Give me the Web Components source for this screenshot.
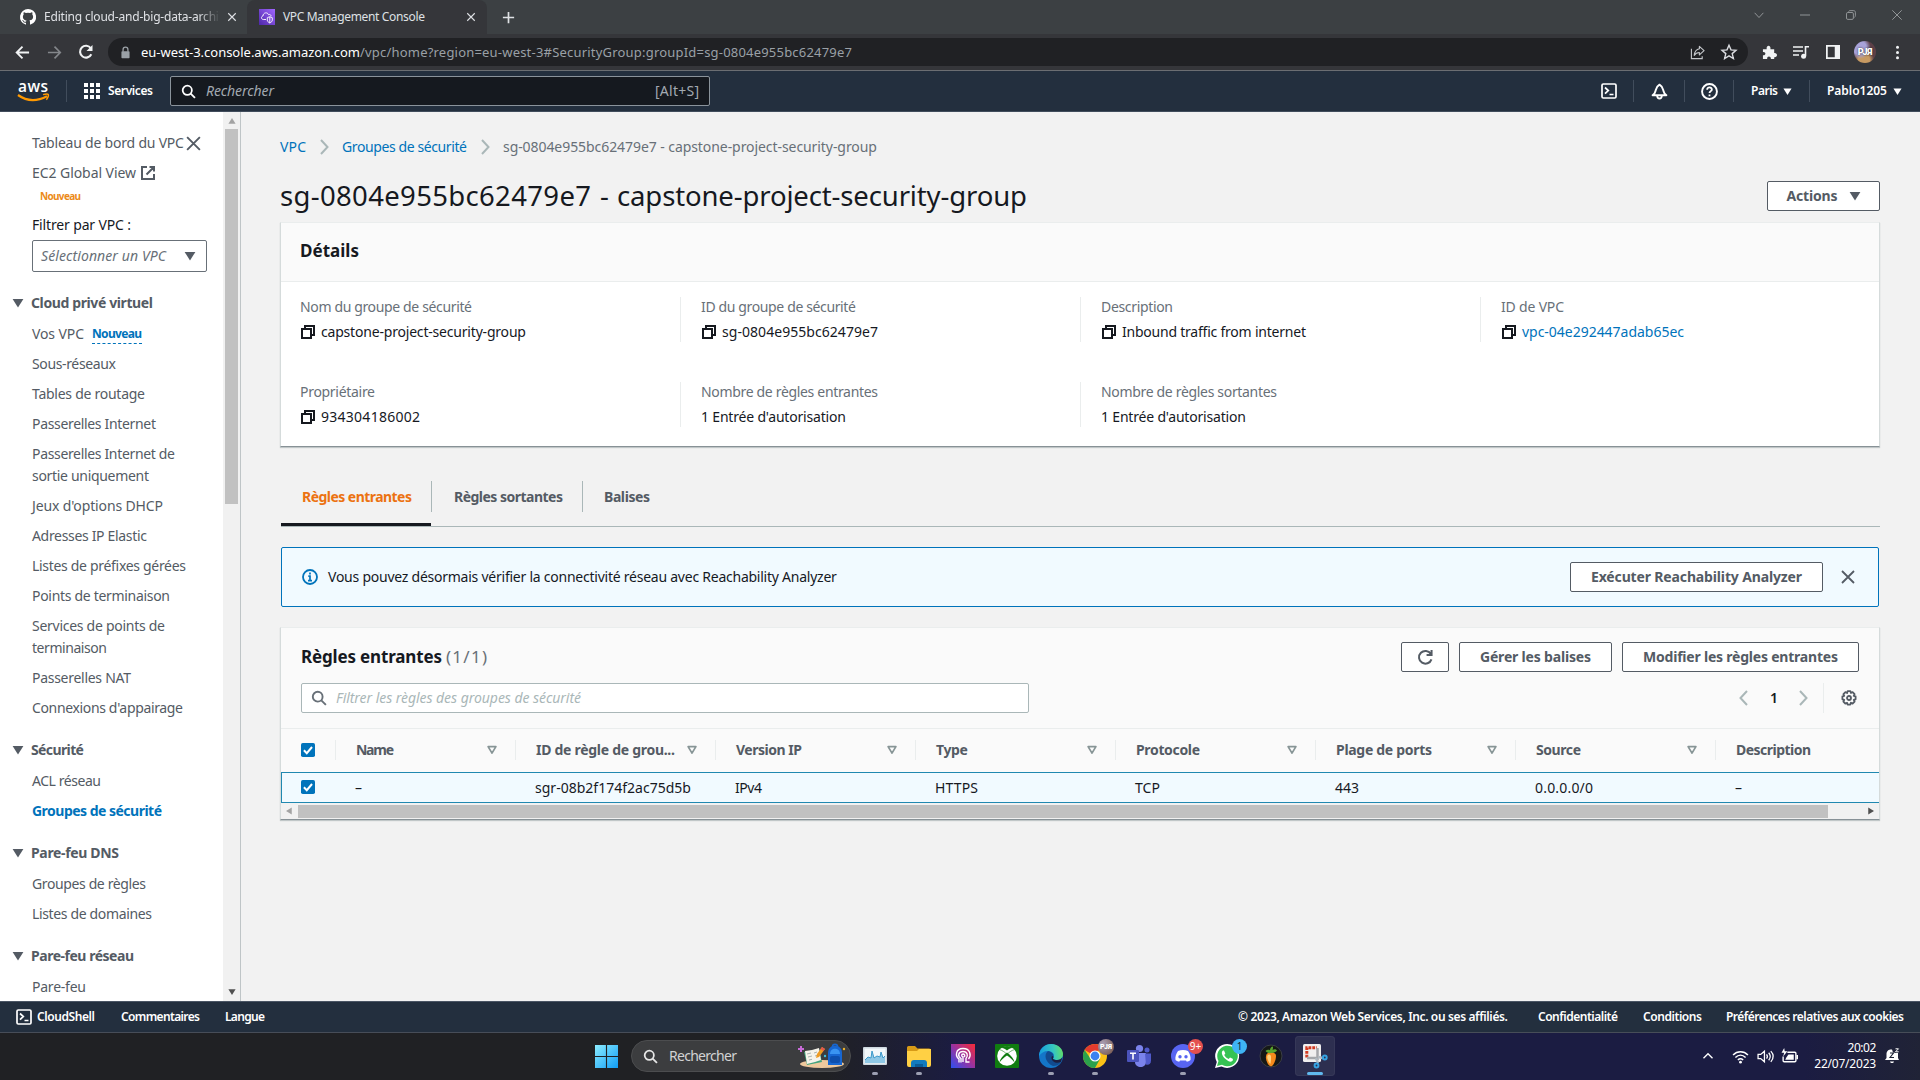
<!DOCTYPE html>
<html lang="fr"><head><meta charset="utf-8"><title>VPC Management Console</title>
<style>
html,body{margin:0;width:1920px;height:1080px;overflow:hidden}
body{font:14px/22px "Noto Sans","Open Sans",sans-serif;color:#16191f;background:#f2f2f2}
</style></head><body>
<app-screen></app-screen>
<script>
const def=(name,css,html,box='block')=>customElements.define(name,class extends HTMLElement{
  constructor(){super();this.attachShadow({mode:'open'});}
  connectedCallback(){if(this.shadowRoot.childNodes.length)return;
    this.shadowRoot.innerHTML=`<style>:host{display:${box};box-sizing:border-box}*{box-sizing:border-box}${css}</style>`+(typeof html==='function'?html(this):html);}
});
/* Text that tracks its letters so that the run takes exactly w pixels */
customElements.define('fit-text',class extends HTMLElement{
  constructor(){super();this.attachShadow({mode:'open'}).innerHTML='<style>:host{display:inline-block;white-space:nowrap;flex:none}span{display:inline-block}</style><span><slot></slot></span>';}
  connectedCallback(){const w=+this.getAttribute('w');if(!w)return;this.style.width=w+'px';
    const s=this.shadowRoot.querySelector('span'),n=this.textContent.trim().length;
    s.style.letterSpacing='0.001px';
    const r=s.getBoundingClientRect().width;
    if(n>1)s.style.letterSpacing=((w-r)/(n-1)).toFixed(3)+'px';}
});
const S='fill="none" stroke="currentColor"';
const ICONS={
close:`<path d="M2 2l12 12M14 2L2 14" ${S} stroke-width="1.8"/>`,
ext:`<path d="M7 2H2v12h12V9M9.5 2H14v4.5M14 2L6.5 9.5" ${S} stroke-width="2"/>`,
copy:`<path d="M5 5V2h9v9h-3M2 5h9v9H2z" ${S} stroke-width="2"/>`,
down:`<path d="M.8 2.500h14.400L8 14z" fill="currentColor"/>`,
filt:`<path d="M2.800 3.500h10.400L8 12.200z" ${S} stroke-width="2.300" stroke-linejoin="round"/>`,
chev:`<path d="M5 1L11.500 8 5 15" ${S} stroke-width="2"/>`,
chevl:`<path d="M11 1L4.500 8l6.500 7" ${S} stroke-width="2"/>`,
search:`<circle cx="6.7" cy="6.7" r="4.9" ${S} stroke-width="1.9"/><path d="M10.3 10.3l4.6 4.6" ${S} stroke-width="1.9"/>`,
info:`<circle cx="8" cy="8" r="7" ${S} stroke-width="1.8"/><path d="M8 3.5v2M6.3 7.2H8v4.2M6 11.6h4" ${S} stroke-width="1.7"/>`,
check:`<rect width="16" height="16" rx="2" fill="#0073bb"/><path d="M3.3 8.3l3.3 3.3 6-7" fill="none" stroke="#fff" stroke-width="2.3"/>`,
refresh:`<path d="M13.6 9.7A6 6 0 1 1 13 4.6M13.7 1v4.6H9" ${S} stroke-width="1.9"/>`,
gear:`<path d="M6.6 1.2h2.8l.5 1.7 1.7-.8 2 2-.9 1.7 1.9.6v2.9l-1.8.6.8 1.7-2 2-1.7-.9-.6 1.9H6.6l-.5-1.8-1.8.8-1.9-2 .8-1.7-1.8-.6V6.4l1.8-.6-.8-1.7 2-2 1.7.9z" ${S} stroke-width="1.8" stroke-linejoin="round"/><circle cx="8" cy="8" r="2" ${S} stroke-width="1.8"/>`,
shell:`<rect x="1" y="1" width="14" height="14" rx="1.3" ${S} stroke-width="1.7"/><path d="M4 4.5l3.3 3L4 10.7M8.5 11.5h4" ${S} stroke-width="1.7"/>`,
bell:`<path d="M1.500 11.500c2.500-1.700 2.500-3 3-5C5.200 4 6.200 2.500 8 1.500c1.800 1 2.800 2.500 3.500 5 .5 2 .5 3.300 3 5zM5.800 12c.2 3.500 4.200 3.500 4.400 0" ${S} stroke-width="1.800" stroke-linejoin="round"/>`,
help:`<circle cx="8" cy="8" r="7" ${S} stroke-width="1.8"/><path d="M5.800 6.300c0-3 4.500-2.800 4.400-.1C10.100 7.700 8 7.700 8 9.500M8 10.800v1.700" ${S} stroke-width="1.700"/>`,
grid:`<path d="M0 0h4v4H0zM6 0h4v4H6zM12 0h4v4h-4zM0 6h4v4H0zM6 6h4v4H6zM12 6h4v4h-4zM0 12h4v4H0zM6 12h4v4H6zM12 12h4v4h-4z" fill="currentColor"/>`,
plus:`<path d="M8 2v12M2 8h12" ${S} stroke-width="1.8"/>`,
back:`<path d="M15 8H2M8 1.800L1.800 8 8 14.200" ${S} stroke-width="2"/>`,
fwd:`<path d="M1 8h13M8 1.800L14.200 8 8 14.200" ${S} stroke-width="1.700"/>`,
reload:`<path d="M13.300 10.200A5.900 5.900 0 1 1 12.800 4.300" ${S} stroke-width="2.100"/><path d="M14.500 1v6h-6z" fill="currentColor"/>`,
lock:`<rect x="3" y="6.500" width="10" height="8.500" rx="1" fill="currentColor"/><path d="M5 7V4.500a3 3 0 0 1 6 0V7" ${S} stroke-width="1.600"/>`,
share:`<path d="M1.500 4v10.500H13V12" ${S} stroke-width="1.200"/><path d="M10 1.500L15 6l-5 4.500V8c-2.500 0-4 .8-5.500 3C5 7 7 4.500 10 4z" ${S} stroke-width="1.200" stroke-linejoin="round"/>`,
star:`<path d="M8 1.300l2 4.600 5 .4-3.800 3.300 1.200 4.900L8 11.900l-4.400 2.600 1.200-4.900L1 6.300l5-.4z" ${S} stroke-width="1.400"/>`,
puzzle:`<path d="M1 4.500h4c-1-5 5-5 4 0h4v4c4-.5 4 5 0 4.500V15H9.500c.3-3.500-4.500-3.500-4 0H1v-4c3.500.5 3.500-4 0-3.500z" fill="currentColor"/>`,
music:`<path d="M0 3h10M0 7h10M0 11h6" ${S} stroke-width="1.600"/><path d="M12.500 12V2.800H16" ${S} stroke-width="1.600"/><circle cx="10.600" cy="12.200" r="2.500" fill="currentColor"/>`,
panel:`<path d="M1 1h14v14H1z" ${S} stroke-width="2"/><path d="M10 1h5v14h-5z" fill="currentColor"/>`,
dots:`<circle cx="8" cy="2.500" r="1.600" fill="currentColor"/><circle cx="8" cy="8" r="1.600" fill="currentColor"/><circle cx="8" cy="13.500" r="1.600" fill="currentColor"/>`,
vdown:`<path d="M1 4.500L8 12l7-7.500" ${S} stroke-width="1.300"/>`,up:`<path d="M2 11l6-6 6 6" ${S} stroke-width="1.800"/>`,
min:`<path d="M0 8h16" ${S} stroke-width="1.300"/>`,
max:`<rect x=".800" y="4" width="11" height="11" rx="2" ${S} stroke-width="1.300"/><path d="M4 2.500C4.500 1.500 5.500 1 6.500 1H12c2 0 3 1 3 3v5c0 1.200-.5 2.200-1.500 2.700" ${S} stroke-width="1.300"/>`,
x1:`<path d="M.500.500l15 15M15.500.500l-15 15" ${S} stroke-width="1.300"/>`,
github:`<path fill="#fff" d="M8 0a8 8 0 0 0-2.500 15.600c.4.100.5-.2.500-.4v-1.500c-2.200.5-2.700-.9-2.700-.9-.4-1-.9-1.200-.9-1.200-.7-.5.100-.5.100-.5.800.1 1.200.8 1.200.8.700 1.300 1.900.9 2.400.7 0-.5.200-.9.500-1.100-1.800-.2-3.700-.9-3.700-4 0-.9.300-1.600.8-2.100-.1-.2-.4-1 .1-2.100 0 0 .7-.2 2.200.8a7.500 7.500 0 0 1 4 0c1.500-1 2.200-.8 2.200-.8.4 1.100.2 1.900.1 2.100.5.600.8 1.300.8 2.100 0 3.100-1.900 3.700-3.700 3.900.3.300.6.800.6 1.500v2.300c0 .2.100.5.600.4A8 8 0 0 0 8 0z"/>`,
vpc:`<defs><linearGradient id="g" x1="0" y1="1" x2="1" y2="0"><stop stop-color="#4d27a8"/><stop offset="1" stop-color="#a166ff"/></linearGradient></defs><rect width="16" height="16" fill="url(#g)"/><path d="M7 10.500H4.300C1.800 10.300 2 7.200 4 7c0-3.500 4.500-4.300 5.500-1.300 1.500-.7 2.700.3 2.500 1.500M8.300 8.700l2.500-1 2.500 1v2.300c0 1.500-1 2.200-2.500 3-1.500-.8-2.500-1.500-2.500-3zM10.800 8v6" fill="none" stroke="#fff" stroke-width=".9"/>`,
win:`<defs><linearGradient id="g" x1="0" y1="0" x2="16" y2="16" gradientUnits="userSpaceOnUse"><stop stop-color="#8cecff"/><stop offset="1" stop-color="#109df5"/></linearGradient></defs><path d="M0 0h7.600v7.600H0zM8.400 0H16v7.600H8.400zM0 8.400h7.600V16H0zM8.400 8.400H16V16H8.400z" fill="url(#g)"/>`,
monitor:`<rect y="3" width="24" height="18" rx="1" fill="#cfd9e0"/><rect x="1.500" y="4.500" width="21" height="15" fill="#f2f8fb"/><path d="M2 16l3-3 3 1 1-7 2 7 3-2 3 1 1-5 2 6 2-2v7H2z" fill="#8fc8e6"/><path d="M2 16l3-3 3 1 1-7 2 7 3-2 3 1 1-5 2 6 2-2" fill="none" stroke="#3d9acb"/>`,
folder:`<path d="M0 3.500Q0 2 1.500 2H8l2.500 2.500H22q2 0 2 2V21H0z" fill="#d79a17"/><path d="M0 7h10l2-2h12v16q0 2-2 2H2q-2 0-2-2z" fill="#ffd044"/><path d="M4 23v-4q0-3 3-3h10q3 0 3 3v4z" fill="#137abd"/><path d="M8 20h8v3H8z" fill="#0b5b96"/>`,
head:`<defs><linearGradient id="g" x1="0" y1="1" x2="1" y2="0"><stop stop-color="#2b50f0"/><stop offset=".5" stop-color="#9a329f"/><stop offset="1" stop-color="#fa2b35"/></linearGradient></defs><rect width="24" height="24" fill="url(#g)"/><path d="M8 18.500v-3.500C4 12 4.500 4.500 12 4.500s8.500 7 5.500 10.500M10 18.500v-4C6 12 7.500 7.500 12 7.500s5.500 4.500 3 7v3.500h3.500M12 18v-5c-2-1-1.500-3 0-3s2.500 1.500 1.200 3" fill="none" stroke="#fff" stroke-width="1.400"/>`,
xbox:`<rect width="24" height="24" rx="1" fill="#107c10"/><circle cx="12" cy="12" r="9.800" fill="#fff"/><path d="M6 4.200c2-.5 4 .8 6 2.300 2-1.500 4-2.800 6-2.300-3-3-9-3-12 0zM4.500 18.500c.5-4 3.500-7 7.500-10 4 3 7 6 7.500 10-2-3-4.500-5-7.500-7-3 2-5.500 4-7.500 7z" fill="#107c10"/><path d="M4.500 5.500c3 1 5 2.500 6.500 4M19.500 5.500c-3 1-5 2.500-6.500 4" stroke="#107c10" fill="none" stroke-width=".6"/>`,
edge:`<defs><linearGradient id="g" x1="0" y1=".4" x2="1" y2=".3"><stop stop-color="#159bde"/><stop offset=".6" stop-color="#36c6c0"/><stop offset="1" stop-color="#64df62"/></linearGradient></defs><circle cx="12" cy="12" r="12" fill="#1476c8"/><path d="M0 11C1 4 6 0 12 0c8 0 12 6 12 10 0 4-3 6-6 6-3 0-4.500-1-3.500-2.500C16 11 14 7 9 7c-4 0-7 2-9 5z" fill="url(#g)"/><path d="M9 7c-5 4-2 12 5 15 3 0 6-1 8-4-4 1-9 0-9-5 3-1 1-5-4-6z" fill="#124b8f"/><path d="M14.500 13.500C13 15 15 16 18 16c2.500 0 4.500-1 5.500-3l-1.500 5c-4 2-10 0-9.500-5 1-2 2.500-1 2 .5z" fill="#1c1f40"/>`,
chrome:`<circle cx="12" cy="12" r="12" fill="#fbc116"/><path d="M12 12L1.600 6A12 12 0 0 1 22.400 6L12 7z" fill="#e33b2e"/><path d="M1.600 6A12 12 0 0 0 12 24l5-9-9.500-.5z" fill="#2ba24c"/><circle cx="12" cy="12" r="5.500" fill="#fff"/><circle cx="12" cy="12" r="4.400" fill="#3b82f0"/>`,
teams:`<circle cx="12.500" cy="4.500" r="3.600" fill="#7b83eb"/><circle cx="20" cy="6" r="2.500" fill="#5059c9"/><path d="M8 9h11v9c0 7-11 6.500-11 0z" fill="#7b83eb"/><path d="M18 9.500h6v7c0 4-3 5-5 4z" fill="#5059c9"/><rect y="6" width="12" height="12" rx="1" fill="#4b53bc"/><path d="M3 9.200h6M6 9v6.500" stroke="#fff" stroke-width="1.600"/>`,
discord:`<circle cx="12" cy="12" r="12" fill="#5865f2"/><path d="M7 7c3-1.300 7-1.300 10 0 2 3 3 6 2.500 9-1.500 1.200-2.500 1.500-3.700 1.800L15 16.500H9l-.8 1.300C7 17.500 6 17.200 4.500 16 4 13 5 10 7 7z" fill="#fff"/><circle cx="9" cy="12.800" r="1.700" fill="#5865f2"/><circle cx="15" cy="12.800" r="1.700" fill="#5865f2"/>`,
whats:`<path d="M0 24l1.800-6A12 12 0 1 1 6.500 22.500z" fill="#fff"/><path d="M2 22l1.500-5A10.300 10.300 0 1 1 7 20.700z" fill="#35c353"/><path d="M8 6.500c-2.500 2-.5 6 2.500 8.500s6 4 7.500 1l-.3-1.300-2.700-1.200-1.300 1.500c-2-.7-3.500-2-4.500-4L10.300 9.500 9 6.500z" fill="#fff"/>`,
fl:`<circle cx="12" cy="12" r="11" fill="#151816" stroke="#3b3e46"/><path d="M7.500 10.500c2-3.500 9.500-2.500 9.500 1.500 0 4-2.500 10-5 10.500C9 22 5.500 14.500 7.500 10.500z" fill="#f58a1c"/><path d="M8.500 11.500c1.500-2 3.500-1 3.500 1.500s0 5-.7 7C9.500 18 7.500 14 8.500 11.500z" fill="#ffd27c"/><path d="M12.500 9C10 9.500 7.500 8.500 6.500 7c1.500-1.500 3-1.500 4.500-.8C11 4 12.500 2.500 14 2.500c0 1.500 0 2.500-.5 3.500 1.500-1 3.500-1 4.500.5-1 1.500-3 2.500-5.500 2.500z" fill="#5aa62f"/>`,
snip:`<rect width="18" height="18" rx="1.500" fill="#f0efef"/><path d="M3.800 13.500V3.800h10" fill="none" stroke="#d23a22" stroke-width="3" stroke-dasharray="2.800 1"/><path d="M14.500 4v12M4 14h11" stroke="#a5a7ab" stroke-width="2.500"/><path d="M13 14l2 5M15.500 13l4 1" stroke="#b0bac2" stroke-width="2.500"/><circle cx="13.500" cy="21.500" r="1.900" fill="none" stroke="#36a3e3" stroke-width="2"/><circle cx="21.800" cy="13.500" r="1.900" fill="none" stroke="#36a3e3" stroke-width="2"/>`,
wifi:`<path d="M1 6.500c4-4 10-4 14 0M3.200 9c3-3 6.600-3 9.600 0M5.500 11.300c1.700-1.600 3.300-1.600 5 0" ${S} stroke-width="1.400"/><circle cx="8" cy="13.300" r="1.300" fill="currentColor"/>`,
sound:`<path d="M1 6h2.500L7 3v10L3.500 10H1zM9 6c1 1.300 1 2.700 0 4M11 4.500c2 2.300 2 4.700 0 7M13 3c3 3.300 3 6.700 0 10" ${S} stroke-width="1.200"/>`,
batt:`<path d="M6 4h7q1 0 1 1v7q0 1-1 1H3q-1 0-1-1V8" ${S} stroke-width="1.300"/><path d="M5 9l2-3h5v5H4zM14.500 6.500h1.500v4h-1.500z" fill="currentColor"/><path d="M3 0L.500 4.500H3L2 8l4-5H3.500z" fill="currentColor"/>`,
belz:`<path d="M1 12l1.500-2V6C2.500 2 6 1 8 1.500l1 3H14V10l1 2zM6 13.500h4c-.5 2-3.500 2-4 0z" fill="currentColor"/><path d="M6 5h3.500L6 9.500h4M11.500.8h3L11.500 4.500h3.200" fill="none" stroke="#1b2033" stroke-width="1.100"/><path d="M11.500.8h3L11.500 3.800h3.200" fill="none" stroke="#fff"/>`,
books:`<ellipse cx="23" cy="20" rx="22" ry="4" fill="#efc99d"/><path d="M5 8l15-3 3 13-15 3z" fill="#43a37d"/><path d="M6 7l7-1 3 12-8 2zM13 6l7-2 2 12-6 2z" fill="#f6f3ea"/><path d="M8 10l4-1M9 13l4-1M10 16l3-.7M15 9l3-1M16 12l3-1" stroke="#aab3b1"/><path d="M23 3l3 2-6 8-3 1 1-4z" fill="#ee9b22"/><path d="M23 3l3 2-1.500 2-3-2z" fill="#e2574c"/><path d="M29 21V9c0-10 14-10 14 0v12z" fill="#1767d2"/><path d="M31 10c0-7 10-7 10 0z" fill="#3994f2"/><rect x="31" y="12" width="10" height="7" rx="2" fill="#0d4fae"/><path d="M33.500 2.500c0-3 5-3 5 0" fill="none" stroke="#1767d2" stroke-width="1.500"/><path d="M2 2v6M-1 5h6" stroke="#c86bd8" stroke-width="2"/><circle cx="45" cy="5" r="1.200" fill="#eeb42c"/><circle cx="26" cy="12" r="1.200" fill="#40c0dc"/>`,
awsarc:`<path d="M0 1c9 6.500 19 6.500 29 1.200" fill="none" stroke="#f90" stroke-width="2.200"/><path d="M25 .6c3-.8 5-.6 5.300 0 .4.800-.3 3.500-2 5.200" fill="none" stroke="#f90" stroke-width="1.500"/>`
};
def('x-icon','svg{display:block;overflow:visible}',e=>{const s=e.getAttribute('s')||16,h=e.getAttribute('h')||s;
  return `<svg width="${s}" height="${h}" viewBox="${e.getAttribute('vb')||'0 0 16 16'}">${ICONS[e.getAttribute('n')]}</svg>`},'block;flex:none');
const ic=(n,s=16,st='')=>`<x-icon n="${n}" s="${s}" style="${st}"></x-icon>`;
const ft=(w,t,st='')=>`<fit-text w="${w}" style="${st}">${t}</fit-text>`;

def('avatar-pic',`div{width:22px;height:22px;border-radius:50%;background:radial-gradient(circle at 25% 30%,#a8a2d8 0 30%,transparent 50%),radial-gradient(circle at 45% 85%,#c79a62 0 25%,transparent 45%),#5d4048;color:#fff;font:900 9px/22px Roboto,sans-serif;text-align:center;text-shadow:0 0 2px #222;letter-spacing:-.2px}`,'<div>PJЯ</div>','block;flex:none');

def('browser-chrome',`
:host{height:71px;color:#dfe1e5;font:12px/20px "Noto Sans",sans-serif;border-bottom:1px solid #6b6e72;background:#35363a}
.tabs{height:34px;background:#3c4043;display:flex;align-items:center}
.t1{width:247px;height:34px;padding:0 9px 0 20px;display:flex;align-items:center}
.fade{flex:none;width:176px;margin-left:8px;-webkit-mask-image:linear-gradient(90deg,#000 88%,transparent)}
.t2{width:240px;height:34px;background:#35363a;border-radius:8px 8px 0 0;padding:0 10px 0 12px;display:flex;align-items:center}
.wc{margin-left:auto;margin-top:-5px;display:flex;gap:36px;padding-right:18px;color:#a4a7aa}.wc>*{width:10px}
.bar{height:36px;display:flex;align-items:center;padding-left:15px;color:#f1f3f4}
.omni{margin-left:14px;width:1640px;height:28px;border-radius:14px;background:#202124;display:flex;align-items:center;padding:0 11px;color:#9aa0a6;font-size:13px}
`,`<div class="tabs"><div class="t1">${ic('github')}<div class="fade">${ft(175,'Editing cloud-and-big-data-archi')}</div>${ic('close',10,'margin-left:7px;margin-right:1px')}</div>
<div class="t2">${ic('vpc')}${ft(142,'VPC Management Console','margin-left:8px')}${ic('close',10,'margin-left:auto;margin-right:1px')}</div>${ic('plus',15,'margin-left:14px')}
<div class="wc">${ic('vdown',10)}${ic('min',10)}${ic('max',10)}${ic('x1',10)}</div></div>
<div class="bar">${ic('back',15)}${ic('fwd',15,'margin-left:17px;color:#84878b')}${ic('reload',16,'margin-left:16px')}
<div class="omni">${ic('lock',13)}${ft(219,'eu-west-3.console.aws.amazon.com','color:#fff;margin-left:9px')}${ft(492,'/vpc/home?region=eu-west-3#SecurityGroup:groupId=sg-0804e955bc62479e7')}${ic('share',15,'margin-left:auto;color:#c4c7cb')}${ic('star',16,'margin-left:16px;color:#dadce0')}</div>
${ic('puzzle',15,'margin-left:14px')}${ic('music',16,'margin-left:16px')}${ic('panel',14,'margin-left:17px')}<avatar-pic style="margin-left:14px"></avatar-pic>${ic('dots',15,'margin-left:14px')}</div>`);

def('aws-logo',`:host{width:32px}b{display:block;font:700 15.5px/11px "Open Sans";height:13px}`,`<b>${ft(30,'aws','font-weight:600')}</b><x-icon n="awsarc" s="31" h="7" vb="0 0 31 7"></x-icon>`,'block;flex:none');

def('aws-nav',`
:host{height:41px;background:#232f3e;border-bottom:1px solid #414d5c;color:#fff;display:flex;align-items:center;padding:0 17px 0 18px;font-size:12px;font-weight:500}
i.d{width:1px;height:22px;background:#414d5c;flex:none}
.s{width:540px;height:30px;border:1px solid #8a939b;border-radius:2px;background:#15191f;display:flex;align-items:center;padding:0 10px;margin-left:17px;font-size:14px;font-weight:400;color:#a2a9b1}
`,`<aws-logo></aws-logo><i class="d" style="margin-left:16px"></i>${ic('grid',16,'margin-left:17px')}${ft(45,'Services','margin-left:8px;font-weight:600')}
<div class="s">${ic('search',15,'color:#fff')}${ft(68,'Rechercher','font-style:italic;margin-left:10px')}${ft(44,'[Alt+S]','margin-left:auto')}</div>
${ic('shell',16,'margin-left:auto')}<i class="d" style="margin-left:16px"></i>${ic('bell',17,'margin-left:17px')}<i class="d" style="margin-left:16px"></i>${ic('help',17,'margin-left:16px')}<i class="d" style="margin-left:15px"></i>
${ft(27,'Paris','margin-left:17px;font-weight:600')}${ic('down',9,'margin-left:5px')}<i class="d" style="margin-left:17px"></i>${ft(60,'Pablo1205','margin-left:17px;font-weight:600')}${ic('down',9,'margin:0 1px 0 6px')}`,'flex');

def('nav-link',':host{margin-bottom:8px;padding-left:32px;color:#545b64}:host([on]) fit-text{color:#0073bb;font-weight:700}fit-text{display:block}',
 e=>e.getAttribute('t').split('|').map((t,i)=>ft(e.getAttribute('w').split('|')[i],t)).join(''));
def('nav-group',':host{margin-top:20px}.h{display:flex;height:22px;align-items:center;padding-left:12px;margin-bottom:9px;font-weight:700;color:#545b64}',
 e=>`<div class="h">${ic('down',12,'margin-right:7px')}${ft(e.getAttribute('w'),e.getAttribute('t'))}</div><slot></slot>`);
def('side-nav',`
:host{width:241px;height:889px;display:flex;border-right:1px solid #bfc5c7;background:#fff;overflow:hidden}
.c{width:223px;padding-top:20px;color:#545b64}
.r{display:flex;height:22px;align-items:center}.p{padding-left:32px}
.sel{width:175px;height:32px;margin:4px 0 7px 32px;border:1px solid #687078;border-radius:2px;display:flex;align-items:center;padding:0 10px 0 8px;font-style:italic;color:#687078}
.n{font-size:12px;line-height:18px;font-weight:700;color:#0073bb;border-bottom:1px dashed #0073bb;margin-left:8px}
.sb{width:17px;background:#f1f1f1;display:flex;flex-direction:column;align-items:center}
.th{width:13px;height:375px;background:#c1c1c1}
`,`<div class="c"><div class="r p">${ft(152,'Tableau de bord du VPC')}${ic('close',17,'margin-left:1px')}</div>
<div class="r p" style="margin-top:8px">${ft(104,'EC2 Global View')}${ic('ext',16,'margin-left:4px')}</div>
<div class="r" style="padding-left:40px;margin-top:1px;color:#ec8b1a;font-size:10px;font-weight:700">${ft(41,'Nouveau')}</div>
<div class="r p" style="margin-top:7px;color:#16191f">${ft(99,'Filtrer par VPC :')}</div>
<div class="sel">${ft(125,'Sélectionner un VPC')}${ic('down',12,'margin-left:auto;color:#545b64')}</div>
<nav-group w="122" t="Cloud privé virtuel"><div class="r p" style="margin-bottom:8px">${ft(52,'Vos VPC')}<span class="n">${ft(50,'Nouveau')}</span></div>
<nav-link w="84" t="Sous-réseaux"></nav-link><nav-link w="113" t="Tables de routage"></nav-link><nav-link w="124" t="Passerelles Internet"></nav-link><nav-link w="143|117" t="Passerelles Internet de|sortie uniquement"></nav-link><nav-link w="131" t="Jeux d'options DHCP"></nav-link><nav-link w="115" t="Adresses IP Elastic"></nav-link><nav-link w="154" t="Listes de préfixes gérées"></nav-link><nav-link w="138" t="Points de terminaison"></nav-link><nav-link w="133|75" t="Services de points de|terminaison"></nav-link><nav-link w="99" t="Passerelles NAT"></nav-link><nav-link w="151" t="Connexions d'appairage"></nav-link></nav-group>
<nav-group w="53" t="Sécurité"><nav-link w="69" t="ACL réseau"></nav-link><nav-link on w="130" t="Groupes de sécurité"></nav-link></nav-group>
<nav-group w="88" t="Pare-feu DNS"><nav-link w="114" t="Groupes de règles"></nav-link><nav-link w="120" t="Listes de domaines"></nav-link></nav-group>
<nav-group w="103" t="Pare-feu réseau"><nav-link w="54" t="Pare-feu"></nav-link></nav-group></div>
<div class="sb">${ic('down',8,'margin:5px 0 4px;transform:rotate(180deg);color:#a3a3a3')}<div class="th"></div>${ic('down',8,'margin-top:auto;margin-bottom:5px;color:#505050')}</div>`,'flex;flex:none');

def('aws-button',`:host{height:30px;border:1px solid #545b64;border-radius:2px;background:#fff;display:flex;align-items:center;justify-content:center;font-weight:700;color:#545b64}`,'<slot></slot>','flex;flex:none');
def('detail-field',`:host{height:45px;border-left:1px solid #eaeded;padding-left:20px;margin-bottom:40px}:host([first]){border-left-color:transparent;padding-left:19px}.l{color:#687078;height:22px;margin-top:-1px}.v{display:flex;align-items:center;height:22px;margin-top:3px}`,
 e=>`<div class="l">${ft(e.getAttribute('lw'),e.getAttribute('l'))}</div><div class="v">${e.hasAttribute('copy')?ic('copy',16,'margin-right:5px'):''}${ft(e.getAttribute('w'),e.getAttribute('v'),e.hasAttribute('link')?'color:#0073bb':'')}</div>`);
def('details-card',`:host{margin:0;width:1600px;height:225px;background:#fff;border:1px solid #d5dbdb;border-top-color:#eaeded;border-bottom-color:#879196;box-shadow:0 1px 1px rgba(0,28,36,.2)}
.h{height:59px;background:#fafafa;border-bottom:1px solid #eaeded;padding:17px 19px;font-size:17px;font-weight:700}
.g{display:grid;grid-template-columns:400px 400px 400px 398px;padding-top:15px;margin-left:-1px}`,
`<div class="h">${ft(59,'Détails')}</div><div class="g">
<detail-field first copy lw="172" l="Nom du groupe de sécurité" w="205" v="capstone-project-security-group"></detail-field>
<detail-field copy lw="155" l="ID du groupe de sécurité" w="156" v="sg-0804e955bc62479e7"></detail-field>
<detail-field copy lw="72" l="Description" w="184" v="Inbound traffic from internet"></detail-field>
<detail-field copy link lw="63" l="ID de VPC" w="162" v="vpc-04e292447adab65ec"></detail-field>
<detail-field first copy lw="75" l="Propriétaire" w="99" v="934304186002"></detail-field>
<detail-field lw="177" l="Nombre de règles entrantes" w="145" v="1 Entrée d'autorisation"></detail-field>
<detail-field lw="176" l="Nombre de règles sortantes" w="145" v="1 Entrée d'autorisation"></detail-field></div>`);
def('tab-bar',`:host{margin:34px 0 0 1px;width:1599px;height:46px;border-bottom:1px solid #aab7b8;display:flex;font-weight:700;color:#545b64}
div{height:31px;border-right:1px solid #aab7b8;padding:5px 20px}
.a{height:45px;border:0;border-bottom:3px solid #16191f;width:150px;color:#ec7211;padding-left:21px}
i{width:1px;height:31px;background:#aab7b8}`,
`<div class="a">${ft(110,'Règles entrantes')}</div><i></i><div style="padding-left:22px;width:151px">${ft(109,'Règles sortantes')}</div><div style="border:0;padding-left:21px">${ft(46,'Balises')}</div>`,'flex');
def('info-alert',`:host{margin:20px 0 0 1px;width:1598px;height:60px;border:1px solid #0073bb;border-radius:2px;background:#f1faff;display:flex;align-items:center;padding:0 22px 0 20px}`,
`${ic('info',16,'color:#0073bb')}${ft(509,'Vous pouvez désormais vérifier la connectivité réseau avec Reachability Analyzer','margin-left:10px')}<aws-button style="margin-left:auto;width:253px">${ft(211,'Exécuter Reachability Analyzer')}</aws-button>${ic('close',16,'margin-left:17px;color:#545b64')}`,'flex');

const cols=[[38,'Name',7,'–'],[139,'ID de règle de grou...',156,'sgr-08b2f174f2ac75d5b'],[66,'Version IP',27,'IPv4'],[32,'Type',43,'HTTPS'],[64,'Protocole',25,'TCP'],[96,'Plage de ports',24,'443'],[45,'Source',58,'0.0.0.0/0'],[75,'Description',7,'–']];
def('rules-table',`:host{margin:20px 0 0 0;width:1600px;height:193px;background:#fafafa;border:1px solid #d5dbdb;border-top-color:#eaeded;border-bottom-color:#879196;box-shadow:0 1px 1px rgba(0,28,36,.2)}
.r{display:flex;align-items:center;height:30px;padding:0 20px}
.in{width:728px;height:30px;border:1px solid #aab7b8;border-radius:2px;background:#fff;display:flex;align-items:center;padding-left:9px;color:#aab7b8;font-style:italic}
.g{display:grid;grid-template-columns:54px 180px repeat(6,200px) 164px;align-items:center;overflow:hidden}
.h{height:44px;margin-top:15px;border-top:1px solid #eaeded;font-weight:700;color:#545b64;padding-bottom:1px}
.c{display:flex;align-items:center;height:20px;padding:0 17px 0 20px;border-left:1px solid #eaeded}
.b{height:31px;border:1px solid #2088b0;border-right:0;background:#f1faff}.b .c{border-color:transparent;padding-left:18px}
.sb{height:16px;background:#f1f1f1;display:flex;align-items:center;justify-content:space-between;padding:0 4px}`,
`<div class="r" style="margin-top:14px">${ft(141,'Règles entrantes','font-size:17px;font-weight:700')}${ft(41,'(1/1)','font-size:17px;color:#687078;margin-left:4px')}
<aws-button style="margin-left:auto;width:48px">${ic('refresh',17)}</aws-button><aws-button style="margin-left:10px;width:153px">${ft(111,'Gérer les balises')}</aws-button><aws-button style="margin-left:10px;width:237px">${ft(195,'Modifier les règles entrantes')}</aws-button></div>
<div class="r" style="margin-top:11px"><div class="in">${ic('search',16,'color:#687078')}${ft(245,'Filtrer les règles des groupes de sécurité','margin-left:9px')}</div>
${ic('chevl',16,'margin-left:auto;color:#aab7b8')}${ft(7,'1','font-weight:600;margin-left:18px')}${ic('chev',16,'margin-left:18px;color:#aab7b8')}<span style="width:1px;height:30px;background:#eaeded;margin-left:12px"></span>${ic('gear',16,'margin-left:17px;margin-right:2px;color:#545b64')}</div>
<div class="g h">${ic('check',14,'margin-left:20px;margin-top:-1px')}${cols.map((c,i)=>`<div class="c">${ft(c[0],c[1])}${i<7?ic('filt',12,'margin-left:auto;color:#879596'):''}</div>`).join('')}</div>
<div class="g b">${ic('check',14,'margin-left:19px;margin-top:-2px')}${cols.map(c=>`<div class="c">${ft(c[2],c[3])}</div>`).join('')}</div>
<div class="sb">${ic('down',8,'transform:rotate(90deg);color:#a3a3a3')}<div style="width:1530px;height:13px;background:#c1c1c1;margin-left:5px;margin-right:auto"></div>${ic('down',8,'transform:rotate(-90deg);color:#505050')}</div>`);

def('main-pane',`:host{flex:1;padding:24px 0 0 39px;background:#f2f2f2;height:889px}
.bc{display:flex;align-items:center;height:22px;color:#0073bb}
.t{display:flex;align-items:center;width:1600px;height:36px;margin-top:20px;font-size:27.5px;line-height:36px}`,
`<div class="bc">${ft(26,'VPC')}${ic('chev',16,'margin:0 10px;color:#aab7b8')}${ft(125,'Groupes de sécurité')}${ic('chev',16,'margin:0 10px;color:#aab7b8')}${ft(374,'sg-0804e955bc62479e7 - capstone-project-security-group','color:#687078')}</div>
<div class="t">${ft(311,'sg-0804e955bc62479e7')}${ft(9,'-','margin:0 8px 0 9px')}${ft(410,'capstone-project-security-group')}<aws-button style="margin-left:auto;width:113px;font-size:14px">${ft(51,'Actions')}${ic('down',12,'margin-left:11px')}</aws-button></div>
<details-card style="margin-top:8px"></details-card><tab-bar></tab-bar><info-alert></info-alert><rules-table></rules-table>`);

def('aws-footer',`:host{height:32px;background:#232f3e;border-top:1px solid #4a5564;border-bottom:1px solid #474d58;color:#fff;display:flex;align-items:center;padding:0 16px;font-size:12px;font-weight:600}`,
`${ic('shell')}${ft(58,'CloudShell','margin-left:5px')}${ft(79,'Commentaires','margin-left:26px')}${ft(40,'Langue','margin-left:25px')}${ft(270,'© 2023, Amazon Web Services, Inc. ou ses affiliés.','margin-left:auto')}${ft(80,'Confidentialité','margin-left:30px')}${ft(59,'Conditions','margin-left:25px')}${ft(178,'Préférences relatives aux cookies','margin-left:24px')}`,'flex');

def('task-icon',`:host{width:40px;height:40px;margin:0 2px;border-radius:4px;padding:8px;position:relative;font-size:10px;color:#fff}
:host([sel]){background:#2d2f50;box-shadow:inset 0 0 0 1px #363858}
.u{position:absolute;left:17px;bottom:1px;width:6px;height:3px;border-radius:2px;background:#9c9fb2}
:host([sel]) .u{left:12px;width:16px;background:#60b9ef}
.b{position:absolute;right:0;top:3px;min-width:15px;height:15px;border-radius:8px;line-height:15px;text-align:center;background:#e4504e}`,
e=>`<x-icon n="${e.getAttribute('n')}" s="24" vb="0 0 24 24"></x-icon>${e.hasAttribute('run')?'<div class="u"></div>':''}${e.hasAttribute('badge')?`<div class="b" style="background:${e.getAttribute('bg')};color:${e.getAttribute('fg')||'#fff'}">${e.getAttribute('badge')}</div>`:''}<slot></slot>`,'block;flex:none');
def('win-taskbar',`:host{height:47px;display:flex;align-items:center;background:linear-gradient(90deg,#202124 0,#202124 43%,#1b1c42 50%,#1b1c42 94%,#202336 100%);color:#fff;padding:0 20px 1px 595px;font:14px/20px "Noto Sans",sans-serif}
.s{width:220px;height:32px;margin:0 2px 0 13px;border-radius:16px;background:#3c3d3f;border:1px solid #4c4d4f;display:flex;align-items:center;padding:0 5px 0 11px;color:#d2d2d3}
.ck{font-size:12px;line-height:16px;text-align:right;display:flex;flex-direction:column;align-items:flex-end}
.av{position:absolute;right:1px;top:3px;width:16px;height:16px;border-radius:50%;background:radial-gradient(circle at 30% 30%,#aaa0b8,#72503f);font:900 7px/16px Roboto;text-align:center}`,
`${ic('win',23)}<div class="s">${ic('search',15,'color:#e6e6e6')}${ft(68,'Rechercher','margin-left:11px')}<x-icon n="books" s="46" h="24" vb="0 0 46 24" style="margin-left:auto"></x-icon></div>
<task-icon n="monitor" run></task-icon><task-icon n="folder" run></task-icon><task-icon n="head"></task-icon><task-icon n="xbox"></task-icon><task-icon n="edge" run></task-icon><task-icon n="chrome" run><div class="av">PJЯ</div></task-icon><task-icon n="teams"></task-icon><task-icon n="discord" run badge="9+" bg="#e4504e"></task-icon><task-icon n="whats" badge="1" bg="#3fb4f5" fg="#123"></task-icon><task-icon n="fl"></task-icon><task-icon n="snip" sel run></task-icon>
${ic('up',12,'margin-left:auto')}${ic('wifi',17,'margin-left:18px')}${ic('sound',17,'margin-left:8px')}${ic('batt',17,'margin-left:7px')}
<div class="ck" style="margin-left:16px">${ft(29,'20:02')}${ft(62,'22/07/2023')}</div>${ic('belz',16,'margin-left:8px')}`,'flex');
def('app-screen',`:host{width:1920px;height:1080px;overflow:hidden}.m{display:flex;height:889px}`,
`<browser-chrome></browser-chrome><aws-nav></aws-nav><div class="m"><side-nav></side-nav><main-pane></main-pane></div><aws-footer></aws-footer><win-taskbar></win-taskbar>`);
</script></body></html>
